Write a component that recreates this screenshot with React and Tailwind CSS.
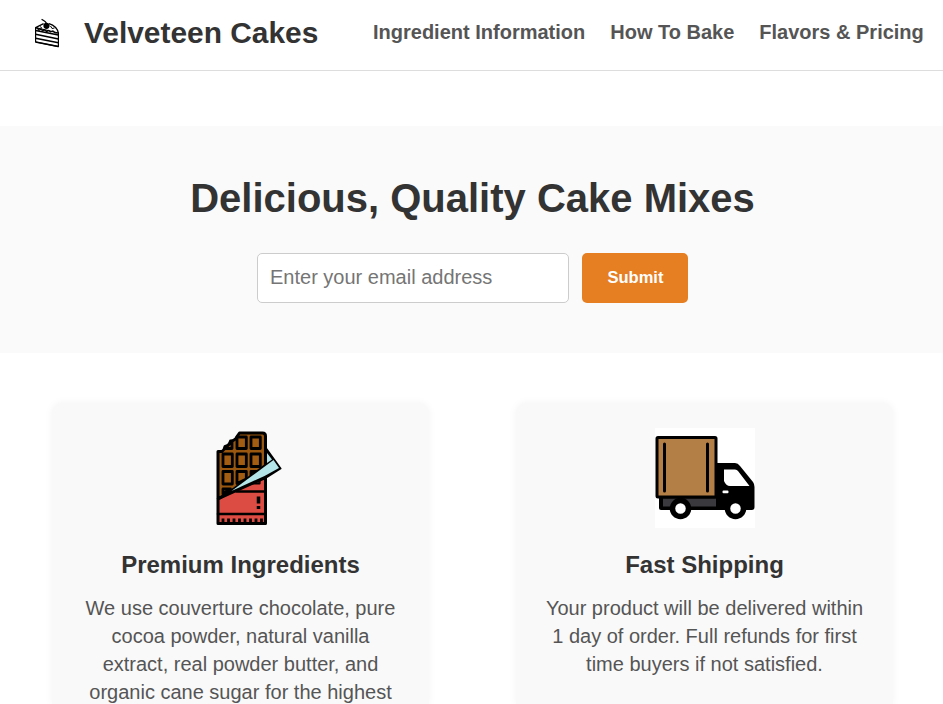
function CakeLogo() {
  return (
    <svg width="28" height="30" viewBox="0 0 28 30" fill="none" stroke="#000" strokeWidth="1.2" strokeLinejoin="round">
      <path d="M1.6 9.6V24L24.4 28.6V15Z" fill="#fff" />
      <path d="M1.6 9.6L9.6 5.6M15 5.6C19.5 7 23.5 10.5 24.4 15" />
      <path d="M1.6 9.6L3 9.8L5 12.3L7 11L8.5 13L10.5 11.8L12.5 13.6L14.8 12.4L16.5 14L19 12.8L21 14.8L24.4 15" />
      <path d="M6 8.5L8 10.2M16.5 8L18 10.5L20.5 10" strokeWidth="1" />
      <path d="M1.6 12.4L24.4 17M1.6 16.3L24.4 20.9M1.6 20.2L24.4 24.8M1.6 24L24.4 28.6" strokeWidth="1.5" />
      <circle cx="12.5" cy="7.8" r="3.1" fill="#000" stroke="none" />
      <path d="M12.3 5C11.5 3.3 10 2.8 7.6 1.2" strokeWidth="1.3" />
    </svg>
  );
}

function ChocolateIcon() {
  return (
    <svg width="100" height="100" viewBox="0 0 100 100" className="shrink-0 -translate-x-[0.5px]" stroke="#000" strokeWidth="3" strokeLinejoin="round" strokeLinecap="round">
      <path d="M27.5 23.5H31.5Q34 22 34.5 18.5Q39 17.5 40 13Q45 12.5 46.5 8.5L49 5H72C74 5 75 6.5 75 8V60L27.5 70Z" fill="#9a570f" />
      <g fill="#a35d13" strokeWidth="2.8">
        <path d="M34.5 20.5L41.5 13.5V20.5Z" />
        <rect x="46.5" y="9" width="9.3" height="11.5" />
        <rect x="60.5" y="9" width="9.3" height="11.5" />
        <rect x="32.5" y="26" width="9.3" height="12.5" />
        <rect x="46.5" y="26" width="9.3" height="12.5" />
        <rect x="60.5" y="26" width="9.3" height="12.5" />
        <rect x="32.5" y="43.5" width="9.3" height="12.5" />
        <path d="M46.5 43.5H55.8V51L46.5 55.5Z" />
        <path d="M60.5 43.5H69L60.5 48Z" />
        <path d="M32.5 66V61H40Z" />
      </g>
      <path d="M27.5 71L75 43V95.5H27.5Z" fill="#dc4c43" />
      <path d="M46 63.5H75M27.5 86H75" fill="none" strokeWidth="2.6" />
      <path d="M60 56L69 50.5V55.5H62" fill="none" strokeWidth="2.2" />
      <path d="M32.5 95V90.5M38 95V90.5M43.5 95V90.5M49 95V90.5M54.5 95V90.5M60 95V90.5M65.5 95V90.5M71 95V90.5" strokeWidth="2.8" strokeLinecap="butt" />
      <path d="M68 68.5V75.5M68 78V81" strokeWidth="3.5" strokeLinecap="butt" />
      <path d="M76 21L90 40.5L75 50L28 71L44 60L76 36Z" fill="#000" strokeWidth="2" />
      <path d="M76.5 25L81.5 31.5L76.5 35Z" fill="#b4e5e9" stroke="none" />
      <path d="M83 32L88.5 40L74 48L41 63L62 47.5Z" fill="#b4e5e9" stroke="none" />
    </svg>
  );
}

function TruckIcon() {
  return (
    <svg width="100" height="100" viewBox="0 0 100 100" className="shrink-0 bg-white">
      <path d="M4 68H63V82H6Q4 82 4 80V68Z" fill="#000" />
      <path d="M8 70.5H62V78.5H8Z" fill="#3a3a3e" />
      <path d="M61 35H80Q83 35 85 38L98 54Q99.5 56 99.5 59V79Q99.5 82 97 82H61Z" fill="#000" />
      <path d="M69 41.5H80Q82 41.5 83 43L94.5 58H75Q71 58 69 53Z" fill="#fff" />
      <rect x="67.5" y="62.5" width="6" height="2.7" rx="1" fill="#fff" />
      <rect x="2" y="9.5" width="59" height="59.5" rx="1" fill="#b47e47" stroke="#000" strokeWidth="3" />
      <path d="M9.5 16V63M52.5 16V63" stroke="#000" strokeWidth="3" strokeLinecap="round" />
      <g fill="#fff" stroke="#000" strokeWidth="5.5">
        <circle cx="25.5" cy="80.5" r="8" />
        <circle cx="80.5" cy="80.5" r="8" />
      </g>
    </svg>
  );
}

function Feature({ icon, title, children }) {
  return (
    <article className="flex h-[301px] w-[377px] flex-col items-center rounded-t-[10px] bg-[#f9f9f9] px-[26px] pt-[25px] text-center shadow-[0_0_8px_rgba(0,0,0,0.05)]">
      {icon}
      <h2 className="mt-[23px] text-[24px] leading-[28px] font-bold text-[#333]">{title}</h2>
      <p className="mt-[15px] text-[20px] leading-[28px] text-[#555]">{children}</p>
    </article>
  );
}

export default function App() {
  return (
    <div className="h-[704px] w-[943px] overflow-hidden bg-white font-['Liberation_Sans',Arial,sans-serif] text-[#333]">
      <header className="flex h-[71px] items-start border-b border-[#ddd]">
        <div className="mt-[18px] ml-[34px]">
          <CakeLogo />
        </div>
        <h1 className="mt-[16px] ml-[22px] w-[289px] text-[29.9px] leading-[34px] font-bold whitespace-nowrap">Velveteen Cakes</h1>
        <nav className="mt-[20px] flex gap-[25px] text-[20px] leading-[24px] font-bold whitespace-nowrap text-[#555]">
          <a>Ingredient Information</a>
          <a>How To Bake</a>
          <a>Flavors &amp; Pricing</a>
        </nav>
      </header>

      <section className="mt-[55px] flex h-[227px] flex-col items-center bg-[#fafafa] pt-[49px]">
        <h2 className="ml-[2px] text-[40px] leading-[46px] font-bold whitespace-nowrap">Delicious, Quality Cake Mixes</h2>
        <form className="mt-[32px] ml-[2px] flex gap-[13px]">
          <input
            type="email"
            placeholder="Enter your email address"
            className="h-[50px] w-[312px] rounded-[5px] border border-[#ccc] bg-white px-[12px] pb-[2px] text-[20px] placeholder:text-[#757575]"
          />
          <button type="button" className="h-[50px] w-[106px] rounded-[5px] bg-[#e67e22] pb-[2px] pl-[1px] text-[16.5px] font-bold text-white">
            Submit
          </button>
        </form>
      </section>

      <main className="mt-[50px] flex gap-[87px] pl-[52px]">
        <Feature icon={<ChocolateIcon />} title="Premium Ingredients">
          We use couverture chocolate, pure cocoa powder, natural vanilla extract, real powder butter, and organic cane sugar for the highest
        </Feature>
        <Feature icon={<TruckIcon />} title="Fast Shipping">
          Your product will be delivered within 1 day of order. Full refunds for first time buyers if not satisfied.
        </Feature>
      </main>
    </div>
  );
}
